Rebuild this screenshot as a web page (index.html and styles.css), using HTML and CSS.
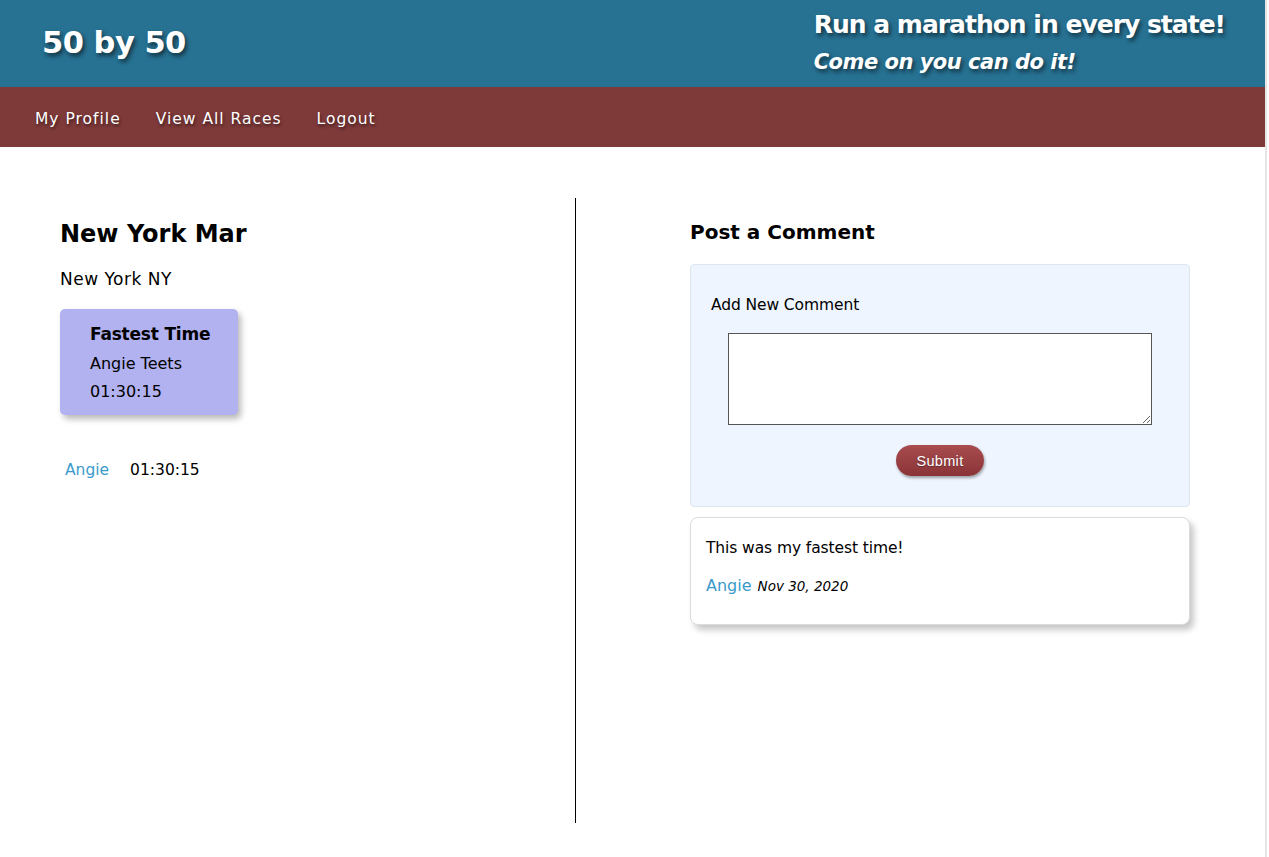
FILE: index.html
```html
<!DOCTYPE html>
<html>
<head>
<meta charset="utf-8">
<title>50 by 50</title>
<link rel="stylesheet" href="styles.css">
</head>
<body>
<div class="page">
  <header class="top">
    <div class="brand">50 by 50</div>
    <div class="tagline">
      <div class="tag-main">Run a marathon in every state!</div>
      <div class="tag-sub">Come on you can do it!</div>
    </div>
  </header>
  <nav class="nav">
    <a class="nav-link" href="#">My Profile</a>
    <a class="nav-link" href="#">View All Races</a>
    <a class="nav-link" href="#">Logout</a>
  </nav>
  <main class="main">
    <section class="left">
      <h1 class="race-title">New York Mar</h1>
      <p class="race-loc">New York NY</p>
      <div class="fastest">
        <div class="fastest-title">Fastest Time</div>
        <div class="fastest-line first">Angie Teets</div>
        <div class="fastest-line">01:30:15</div>
      </div>
      <div class="result-row">
        <a class="user-link" href="#">Angie</a>
        <span class="result-time">01:30:15</span>
      </div>
    </section>
    <section class="right">
      <h2 class="post-title">Post a Comment</h2>
      <form class="comment-form">
        <label class="form-label">Add New Comment</label>
        <textarea class="form-text"></textarea>
        <button type="button" class="submit-btn">Submit</button>
      </form>
      <div class="comment">
        <p class="comment-text">This was my fastest time!</p>
        <div class="comment-meta">
          <a class="user-link" href="#">Angie</a>
          <span class="comment-date">Nov 30, 2020</span>
        </div>
      </div>
    </section>
  </main>
</div>
</body>
</html>
```
FILE: styles.css
```css
html, body {
  margin: 0;
  padding: 0;
  background: #fff;
}
body {
  font-family: "DejaVu Sans", Verdana, sans-serif;
  color: #000;
}
.page {
  width: 1265px;
  min-height: 857px;
  border-right: 2px solid #e6e6e6;
}
.top {
  background: #277192;
  height: 87px;
  display: flex;
  justify-content: space-between;
  align-items: flex-start;
  padding: 0 40px 0 42px;
  box-sizing: border-box;
  color: #fff;
  text-shadow: 2px 3px 4px rgba(0, 0, 0, 0.55);
}
.brand {
  font-size: 30.5px;
  font-weight: bold;
  margin-top: 25px;
  letter-spacing: -0.5px;
}
.tagline {
  margin-top: 9px;
}
.tag-main {
  font-size: 25px;
  font-weight: bold;
  letter-spacing: -1px;
  line-height: 32px;
}
.tag-sub {
  font-size: 21px;
  font-weight: bold;
  font-style: italic;
  letter-spacing: -0.5px;
  line-height: 28px;
  margin-top: 7px;
}
.nav {
  background: #7e3939;
  height: 60px;
  display: flex;
  align-items: center;
  padding-left: 35px;
  gap: 35px;
}
.nav-link {
  color: #fff;
  text-decoration: none;
  font-size: 15.5px;
  letter-spacing: 1px;
  text-shadow: 1px 2px 3px rgba(0, 0, 0, 0.5);
  margin-top: 3px;
}
.main {
  display: grid;
  grid-template-columns: 576px 1fr;
  padding-top: 51px;
}
.left {
  border-right: 1px solid #000;
  min-height: 625px;
  padding-left: 60px;
  box-sizing: border-box;
}
.race-title {
  font-size: 24px;
  font-weight: bold;
  margin: 20px 0 0;
  line-height: 32px;
}
.race-loc {
  font-size: 17px;
  margin: 18px 0 0;
  line-height: 22px;
  letter-spacing: 0.5px;
}
.fastest {
  background: #b3b2f0;
  width: 178px;
  height: 106px;
  box-sizing: border-box;
  border-radius: 5px;
  margin-top: 19px;
  padding: 13px 0 0 30px;
  box-shadow: 3px 4px 6px rgba(0, 0, 0, 0.28);
}
.fastest-title {
  font-size: 17px;
  font-weight: bold;
  line-height: 24px;
  letter-spacing: -0.2px;
}
.fastest-line {
  font-size: 16px;
  line-height: 28px;
}
.fastest-line.first {
  margin-top: 4px;
}
.result-row {
  margin-top: 44px;
  padding-left: 5px;
  display: flex;
  gap: 21px;
  font-size: 15.5px;
  line-height: 22px;
}
.user-link {
  color: #3a9acb;
  text-decoration: none;
}
.right {
  padding-left: 114px;
}
.post-title {
  font-size: 20px;
  font-weight: bold;
  margin: 20px 0 0;
  line-height: 28px;
}
.comment-form {
  margin-top: 18px;
  width: 500px;
  height: 243px;
  box-sizing: border-box;
  background: #eef5fe;
  border: 1px solid #dce6f0;
  border-radius: 4px;
  padding: 29px 20px 0 20px;
  display: flex;
  flex-direction: column;
  align-items: center;
}
.form-label {
  align-self: flex-start;
  font-size: 15.5px;
  line-height: 22px;
  letter-spacing: -0.1px;
}
.form-text {
  width: 424px;
  height: 92px;
  box-sizing: border-box;
  margin-top: 17px;
  border: 1px solid #555;
  background: #fff;
  resize: both;
}
.submit-btn {
  margin-top: 20px;
  width: 88px;
  height: 31px;
  border: none;
  border-radius: 16px;
  background: linear-gradient(#a84c4e, #8a3437);
  color: #fff;
  font-family: "Liberation Sans", Arial, sans-serif;
  font-size: 14.5px;
  letter-spacing: 0.3px;
  box-shadow: 1px 2px 3px rgba(0, 0, 0, 0.35);
  text-shadow: 0 1px 1px rgba(0, 0, 0, 0.3);
}
.comment {
  margin-top: 10px;
  width: 500px;
  height: 108px;
  box-sizing: border-box;
  background: #fff;
  border: 1px solid #dcdcdc;
  border-radius: 8px;
  box-shadow: 4px 5px 6px rgba(0, 0, 0, 0.22);
  padding: 19px 15px 0 15px;
}
.comment-text {
  margin: 0;
  font-size: 15.5px;
  line-height: 22px;
  letter-spacing: -0.1px;
}
.comment-meta {
  margin-top: 16px;
  display: flex;
  align-items: baseline;
  gap: 6px;
  font-size: 16px;
  line-height: 22px;
}
.comment-date {
  font-style: italic;
  font-size: 13.5px;
}
```
